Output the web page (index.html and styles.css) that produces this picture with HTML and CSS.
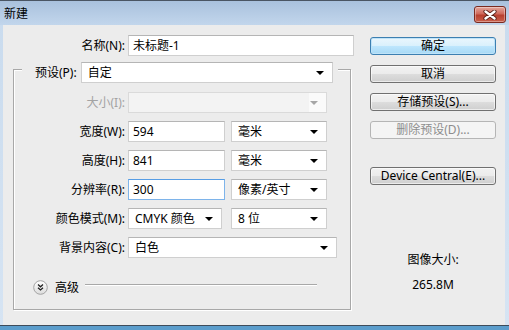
FILE: index.html
```html
<!DOCTYPE html>
<html lang="zh">
<head>
    <meta charset="UTF-8">
    <meta name="viewport" content="width=device-width, initial-scale=1.0">
    <title>新建</title>
    <link rel="stylesheet" href="styles.css">
</head>
<body>

    <div class="window">
        <!-- Title bar -->
        <div class="titlebar">
            <span class="title">新建</span>
            <div class="close">
                <svg width="14" height="10" viewBox="0 0 14 10">
                    <path d="M2.5 1.5 L11.5 8.5 M11.5 1.5 L2.5 8.5" stroke="#5a2219" stroke-width="4.2" stroke-linecap="round"/>
                    <path d="M2.5 1.5 L11.5 8.5 M11.5 1.5 L2.5 8.5" stroke="#fff" stroke-width="2.4" stroke-linecap="round"/>
                </svg>
            </div>
        </div>

        <div class="content">
            <!-- Left: form -->
            <div class="form">
                <div class="row name-row">
                    <label>名称(N):</label>
                    <div class="field name">未标题-1</div>
                </div>

                <div class="group">
                    <div class="group-head">
                        <label>预设(P):</label>
                        <div class="select preset">自定</div>
                    </div>

                    <div class="row first">
                        <label class="off">大小(I):</label>
                        <div class="select size disabled"></div>
                    </div>
                    <div class="row">
                        <label>宽度(W):</label>
                        <div class="field num">594</div>
                        <div class="select unit">毫米</div>
                    </div>
                    <div class="row">
                        <label>高度(H):</label>
                        <div class="field num">841</div>
                        <div class="select unit">毫米</div>
                    </div>
                    <div class="row">
                        <label>分辨率(R):</label>
                        <div class="field num focus">300</div>
                        <div class="select unit">像素/英寸</div>
                    </div>
                    <div class="row">
                        <label>颜色模式(M):</label>
                        <div class="select mode">CMYK 颜色</div>
                        <div class="select unit depth">8 位</div>
                    </div>
                    <div class="row">
                        <label>背景内容(C):</label>
                        <div class="select bg">白色</div>
                    </div>

                    <div class="advanced">
                        <svg class="adv-icon" width="15" height="15" viewBox="0 0 15 15">
                            <defs>
                                <linearGradient id="g" x1="0" y1="0" x2="0" y2="1">
                                    <stop offset="0" stop-color="#ffffff"/>
                                    <stop offset="1" stop-color="#dcdcdc"/>
                                </linearGradient>
                            </defs>
                            <circle cx="7.5" cy="7.5" r="6.8" fill="url(#g)" stroke="#a3a3a3"/>
                            <path d="M5 4.6 L7.5 6.8 L10 4.6 M5 7.8 L7.5 10 L10 7.8" fill="none" stroke="#222" stroke-width="1.3"/>
                        </svg>
                        <span>高级</span>
                        <div class="adv-line"></div>
                    </div>
                </div>
            </div>

            <!-- Right: buttons -->
            <div class="side">
                <button class="btn default">确定</button>
                <button class="btn">取消</button>
                <button class="btn">存储预设(S)...</button>
                <button class="btn" disabled>删除预设(D)...</button>
                <button class="btn device">Device Central(E)...</button>

                <div class="info">
                    <p>图像大小:</p>
                    <p>265.8M</p>
                </div>
            </div>
        </div>
        <div class="frame-bottom"></div>
    </div>

</body>
</html>
```

FILE: styles.css
```css
* {
    margin: 0;
    padding: 0;
    box-sizing: border-box;
}

body {
    font-family: "Noto Sans", "Noto Sans CJK SC", sans-serif;
    font-size: 12px;
    color: #000;
    background: #c4d7ec;
}

.window {
    width: 509px;
    height: 330px;
    background: linear-gradient(#c9dbee, #d6e4f3);
    border-top: 1px solid #4a5563;
    display: flex;
    flex-direction: column;
}

/* Title bar */
.titlebar {
    height: 24px;
    display: flex;
    align-items: center;
    justify-content: space-between;
    padding: 0 3px 0 4px;
    background: linear-gradient(#a9c1dd, #c2d6ec);
}

.title {
    line-height: 16px;
    margin-top: 2px;
}

.close {
    width: 32px;
    height: 17px;
    margin-top: 3px;
    border: 1px solid #7a2a20;
    border-radius: 3px;
    background: linear-gradient(#e4a79d, #cf6a5c 45%, #b8402f 55%, #c9604c);
    box-shadow: inset 0 0 0 1px rgba(255, 255, 255, 0.35);
    display: flex;
    align-items: center;
    justify-content: center;
}

/* Body */
.content {
    flex: 1;
    margin: 0 4px 0 3px;
    background: #ececec;
    display: flex;
}

.form {
    width: 351px;
    padding: 10px 0 0 10px;
}

.row {
    display: flex;
    height: 21px;
    margin-top: 8px;
}

.row label {
    width: 114px;
    padding-right: 3px;
    text-align: right;
    line-height: 21px;
}

.name-row {
    margin-top: 0;
}

.name-row label {
    width: 115px;
}

label.off {
    color: #a3a3a3;
}

.field,
.select {
    height: 21px;
    line-height: 19px;
    padding-left: 4px;
    background: #fff;
    border: 1px solid #cfcfcf;
    border-top-color: #b5b5b5;
    white-space: nowrap;
}

.field.name {
    width: 226px;
}

.field.num {
    width: 97px;
}

.field.focus {
    border-color: #7eb4ea;
    border-top-color: #569de5;
}

.select {
    position: relative;
    padding-left: 6px;
}

.select::after {
    content: "";
    position: absolute;
    right: 8px;
    top: 8px;
    border-left: 4px solid transparent;
    border-right: 4px solid transparent;
    border-top: 4px solid #000;
}

.select.preset {
    width: 252px;
}

.select.size {
    width: 199px;
}

.select.disabled {
    background: linear-gradient(to right, #f3f3f3 180px, #fafafa 180px);
    border-color: #dadada;
}

.select.disabled::after {
    border-top-color: #a6a6a6;
}

.select.unit {
    width: 96px;
    margin-left: 6px;
}

.select.mode {
    width: 94px;
}

.select.depth {
    margin-left: 9px;
}

.select.bg {
    width: 209px;
}

/* Preset group */
.group {
    width: 338px;
    margin-top: 13px;
    border: 1px solid #a8a8a8;
    box-shadow: 1px 1px 0 #fff, inset 1px 1px 0 #fff;
    padding-bottom: 14px;
}

.group-head {
    display: flex;
    width: fit-content;
    gap: 4px;
    margin: -8px 0 0 8px;
    padding: 0 5px 0 13px;
    background: #ececec;
    height: 21px;
}

.group-head label {
    line-height: 21px;
}

.row.first {
    margin-top: 9px;
}

.advanced {
    display: flex;
    align-items: center;
    margin-top: 22px;
    padding-left: 19px;
    height: 15px;
}

.adv-icon {
    margin-right: 7px;
}

.advanced span {
    line-height: 15px;
}

.adv-line {
    width: 232px;
    height: 2px;
    margin: 0 0 5px 6px;
    border-top: 1px solid #a8a8a8;
    border-bottom: 1px solid #fff;
}

/* Buttons column */
.side {
    width: 126px;
    margin-left: 16px;
    padding-top: 12px;
    display: flex;
    flex-direction: column;
}

.btn {
    height: 18px;
    margin-bottom: 10px;
    font-family: inherit;
    font-size: 12px;
    line-height: 16px;
    color: #000;
    border: 1px solid #707070;
    border-radius: 3px;
    background: linear-gradient(#f2f2f2 0, #ebebeb 50%, #dddddd 50%, #cfcfcf 100%);
    box-shadow: inset 0 0 0 1px rgba(255, 255, 255, 0.6);
}

.btn.default {
    border-color: #3c7fb1;
    background: linear-gradient(#eaf6fd 0, #d9f0fc 50%, #bee6fd 50%, #a7d9f5 100%);
    box-shadow: inset 0 0 0 1px #bfe3f8;
}

.btn:disabled {
    color: #8d8d8d;
    border-color: #b5b5b5;
    background: #f4f4f4;
    box-shadow: none;
}

.btn.device {
    margin-top: 18px;
}

.info {
    margin-top: 56px;
    text-align: center;
}

.info p {
    line-height: 17px;
    margin-bottom: 8px;
}

.frame-bottom {
    height: 5px;
    border-top: 1px solid #3e4c5a;
    background: #5b9dcc;
}
```
